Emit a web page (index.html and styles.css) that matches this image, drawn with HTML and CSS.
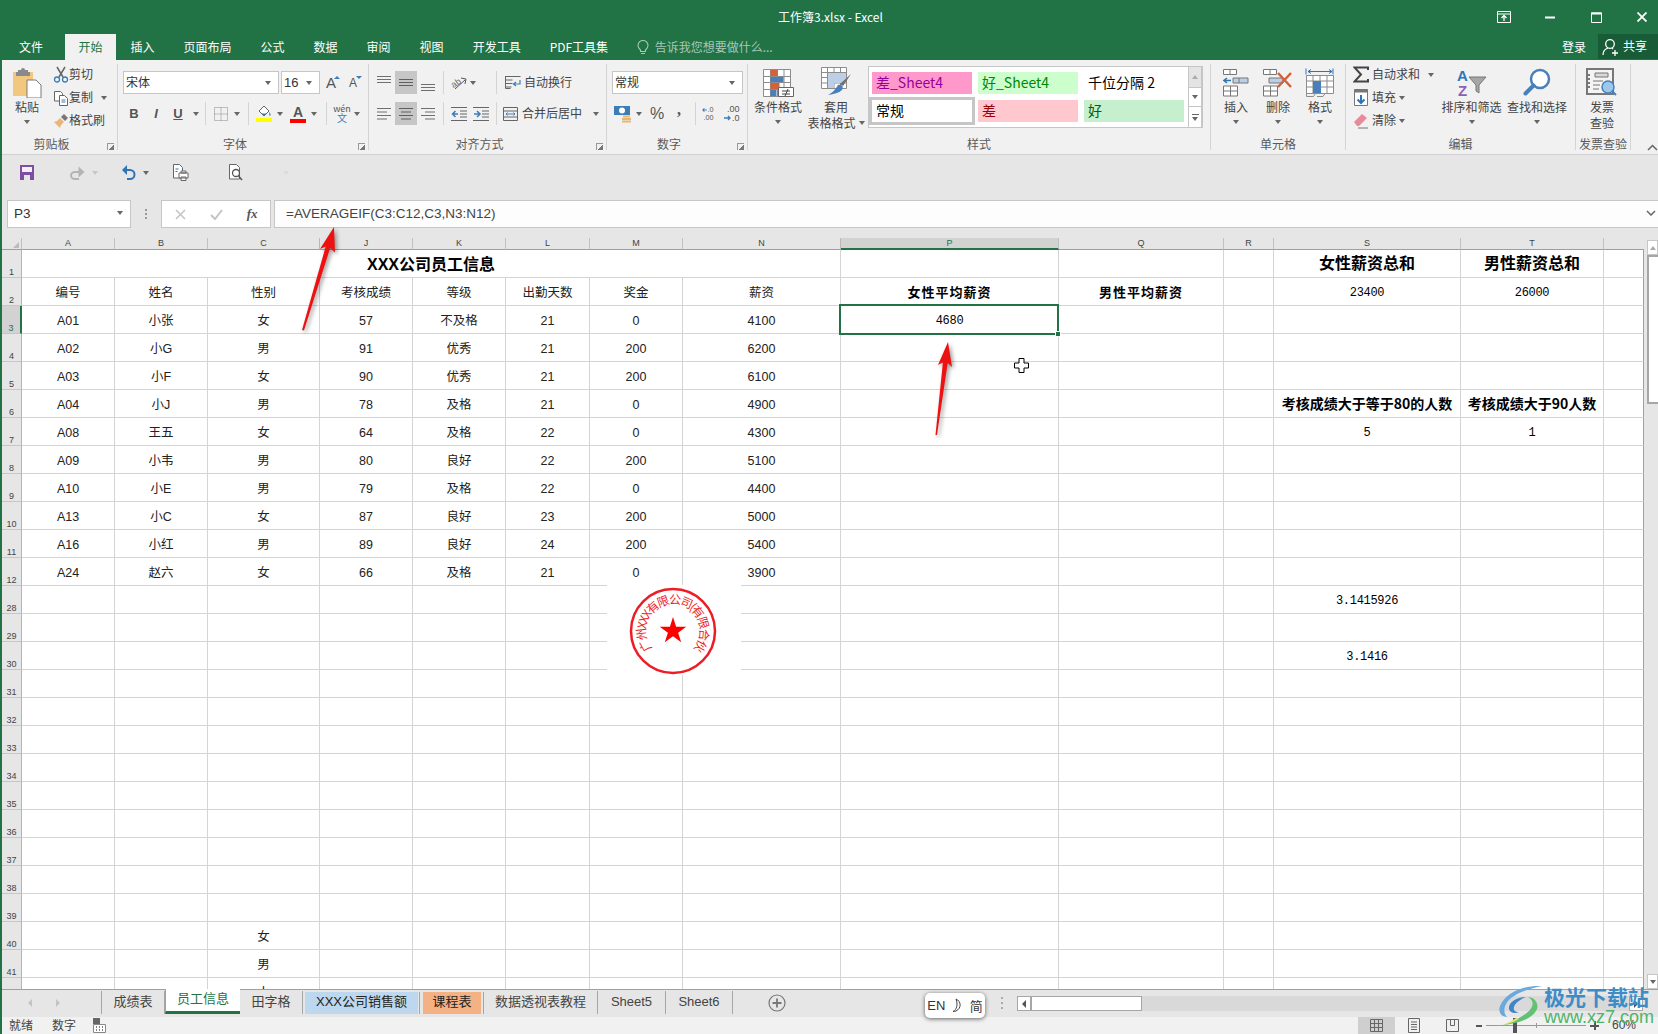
FILE: index.html
```html
<!DOCTYPE html>
<html lang="zh-CN">
<head>
<meta charset="utf-8">
<title>工作簿3.xlsx - Excel</title>
<link rel="stylesheet" href="styles.css">
</head>
<body>
<div class="app">
  <header class="titlebar">
    <span class="doc">工作簿3.xlsx - Excel</span>
    <div class="winbtns">
      <span class="wb"><svg width="14" height="12" viewBox="0 0 14 12"><path d="M.5 .5h13v11H.5zM.5 3h13" fill="none" stroke="#fff"/><path d="M7 10V5M4.500 7 7 4.500 9.500 7" fill="none" stroke="#fff" stroke-width="1.300"/></svg></span>
      <span class="wb"><svg width="10" height="10" viewBox="0 0 10 10"><path d="M0 5.500h10" stroke="#fff" stroke-width="2"/></svg></span>
      <span class="wb"><svg width="11" height="11" viewBox="0 0 11 11"><path d="M.5 1h10v9.500h-10z" fill="none" stroke="#fff"/><path d="M0 1.500h11" stroke="#fff" stroke-width="2"/></svg></span>
      <span class="wb wb-x"><svg width="10" height="10" viewBox="0 0 10 10"><path d="M.5 .5l9 9M9.500 .5l-9 9" stroke="#fff" stroke-width="1.800"/></svg></span>
    </div>
  </header>

  <nav class="tabs">
    <span class="tab tab-file">文件</span>
    <span class="tab tab-on">开始</span>
    <span class="tab">插入</span>
    <span class="tab">页面布局</span>
    <span class="tab">公式</span>
    <span class="tab">数据</span>
    <span class="tab">审阅</span>
    <span class="tab">视图</span>
    <span class="tab">开发工具</span>
    <span class="tab">PDF工具集</span>
    <span class="tell"><svg width="12" height="15" viewBox="0 0 12 15"><path d="M3.500 10C2 8.500 1 7.500 1 5.500a5 5 0 0 1 10 0c0 2-1 3-2.500 4.500v1.500h-5zM4 13.500h4" fill="none" stroke="#a9c7b6" stroke-width="1.100"/></svg>告诉我您想要做什么...</span>
    <span class="login">登录</span>
    <span class="share"><svg width="18" height="18" viewBox="0 0 18 18"><circle cx="8" cy="6" r="4.300" fill="none" stroke="#fff" stroke-width="1.300"/><path d="M1 17c0-4 2-6 5-7M10 10l1 1M13 12v6M10 15h6" fill="none" stroke="#fff" stroke-width="1.300"/></svg>共享</span>
  </nav>

  <section class="ribbon">
    <div class="grp g-clip">
      <div class="body">
        <div class="lg w50">
          <span class="ic"><svg width="30" height="31" viewBox="0 0 30 31"><path d="M1 5h20v24H1z" fill="#f2c77f"/><path d="M6 5V3h3a2 2 0 0 1 4 0h3v2h2v4H4V5z" fill="#8a8a8a"/><path d="M15 13h9l5 5v13H15z" fill="#fff" stroke="#7a7a7a"/></svg></span>
          <span class="tx">粘贴</span>
          <span class="car mt5"></span>
        </div>
        <div class="col">
          <div class="sm"><span class="si"><svg width="16" height="17" viewBox="0 0 16 17"><path d="M4 1l6 10M12 1L6 11" stroke="#666" stroke-width="1.500" fill="none"/><circle cx="4" cy="13.500" r="2.500" fill="none" stroke="#3e7cb8" stroke-width="1.300"/><circle cx="12" cy="13.500" r="2.500" fill="none" stroke="#3e7cb8" stroke-width="1.300"/></svg></span>剪切</div>
          <div class="sm"><span class="si"><svg width="16" height="16" viewBox="0 0 16 16"><path d="M1.500 1.500h6l2 2V11h-8z" fill="#fff" stroke="#666"/><path d="M6.500 5.500h5l3 3v7h-8z" fill="#fff" stroke="#666"/><path d="M8.500 10h4M8.500 12h4" stroke="#3e7cb8"/></svg></span>复制<span class="car ml8"></span></div>
          <div class="sm"><span class="si"><svg width="16" height="16" viewBox="0 0 16 16"><path d="M8 4l4 4 3-3-4-4z" fill="#777"/><path d="M7 5l4 4-3 3-1 3-6-6 3-1z" fill="#eab676"/></svg></span>格式刷</div>
        </div>
      </div>
      <div class="lbl lp">剪贴板</div>
      <span class="launch"></span>
    </div>

    <div class="grp g-font">
      <div class="rows pl5">
        <div class="r">
          <span class="box w156">宋体<span class="car push"></span></span>
          <span class="box w39 ml2 num">16<span class="car push"></span></span>
          <span class="bi w22 letter">A<i class="tri up"></i></span>
          <span class="bi w22 letter small">A<i class="tri down"></i></span>
        </div>
        <div class="r">
          <span class="bi w22 fmt">B</span>
          <span class="bi w22 fmt it">I</span>
          <span class="bi w22 fmt un">U</span>
          <span class="bi w13"><span class="car"></span></span>
          <span class="sep w7"></span>
          <span class="bi w24"><svg width="14" height="14" viewBox="0 0 14 14"><path d="M.5 .5h13v13H.5z" fill="none" stroke="#888" stroke-dasharray="1 1"/><path d="M7 .5v13M.5 7h13" stroke="#888" stroke-dasharray="1 1"/></svg></span>
          <span class="bi w8"><span class="car"></span></span>
          <span class="sep w14"></span>
          <span class="bi w18"><svg width="16" height="18" viewBox="0 0 16 18"><path d="M3 6l5-5 5 5-5 5z" fill="#fff" stroke="#666"/><path d="M5 8.500h6L8 11z" fill="#3e7cb8"/><path d="M13.500 7c1 2 1.500 3 .5 4-1-1-1-2-.5-4z" fill="#3e7cb8"/><path d="M0 13h16v4H0z" fill="#ffff00"/></svg></span>
          <span class="bi w14"><span class="car"></span></span>
          <span class="bi w22 color-a">A<i class="under"></i></span>
          <span class="bi w10"><span class="car"></span></span>
          <span class="sep w14"></span>
          <span class="bi w18 wen"><i>wén</i><b>文</b></span>
          <span class="bi w12"><span class="car"></span></span>
        </div>
      </div>
      <div class="lbl lp">字体</div>
      <span class="launch"></span>
    </div>

    <div class="grp g-align">
      <div class="rows pl4">
        <div class="r">
          <span class="bi w22"><svg width="14" height="16" viewBox="0 0 14 16"><path d="M0 1.500h14M0 4.500h14M0 7.500h14" stroke="#6f6f6f"/></svg></span>
          <span class="bi w22 on"><svg width="14" height="16" viewBox="0 0 14 16"><path d="M0 4.500h14M0 7.500h14M0 10.500h14" stroke="#5f5f5f"/></svg></span>
          <span class="bi w22"><svg width="14" height="16" viewBox="0 0 14 16"><path d="M0 9.500h14M0 12.500h14M0 15.500h14" stroke="#6f6f6f"/></svg></span>
          <span class="sep w9"></span>
          <span class="bi w21"><svg width="17" height="15" viewBox="0 0 17 15"><text x="1" y="11" font-size="9" fill="#666" transform="rotate(-35 6 8)" font-family="Liberation Sans">ab</text><path d="M5 14L15 5M11 3l5 1-1 5" fill="none" stroke="#555"/></svg></span>
          <span class="bi w8"><span class="car"></span></span>
          <span class="w15"></span>
          <span class="sep w8"></span>
          <span class="wtxt ml4"><svg width="17" height="16" viewBox="0 0 17 16"><path d="M1.500 1.500h15M1.500 5h7M1.500 8.500h7M1.500 12h6M1.500 1v12.500h5" fill="none" stroke="#666"/><path d="M16 5v4h-6M12 7l-2.500 2 2.500 2" fill="none" stroke="#3e7cb8" stroke-width="1.200"/></svg>自动换行</span>
        </div>
        <div class="r">
          <span class="bi w22"><svg width="14" height="14" viewBox="0 0 14 14"><path d="M0 1.500h14M0 5h10M0 8.500h14M0 12h10" stroke="#6f6f6f"/></svg></span>
          <span class="bi w22 on"><svg width="14" height="14" viewBox="0 0 14 14"><path d="M0 1.500h14M2 5h10M0 8.500h14M2 12h10" stroke="#5f5f5f"/></svg></span>
          <span class="bi w22"><svg width="14" height="14" viewBox="0 0 14 14"><path d="M0 1.500h14M4 5h10M0 8.500h14M4 12h10" stroke="#6f6f6f"/></svg></span>
          <span class="sep w9"></span>
          <span class="bi w22"><svg width="16" height="14" viewBox="0 0 16 14"><path d="M0 .5h16M9 4h7M9 7h7M9 10h7M0 13.500h16" stroke="#666"/><path d="M7 7H2M4.500 4 1.500 7l3 3" fill="none" stroke="#3e7cb8" stroke-width="1.500"/></svg></span>
          <span class="bi w22"><svg width="16" height="14" viewBox="0 0 16 14"><path d="M0 .5h16M9 4h7M9 7h7M9 10h7M0 13.500h16" stroke="#666"/><path d="M1 7h5M4 4l3 3-3 3" fill="none" stroke="#3e7cb8" stroke-width="1.500"/></svg></span>
          <span class="sep w8"></span>
          <span class="wtxt ml2"><svg width="17" height="16" viewBox="0 0 17 16"><path d="M1.500 1.500h14v13h-14zM1.500 5h14M1.500 11h14" fill="none" stroke="#666"/><path d="M4 8h9M5.500 6.500 4 8l1.500 1.500M11.500 6.500 13 8l-1.500 1.500" fill="none" stroke="#3e7cb8"/></svg>合并后居中<span class="car ml8"></span></span>
        </div>
      </div>
      <div class="lbl lp">对齐方式</div>
      <span class="launch"></span>
    </div>

    <div class="grp g-num">
      <div class="rows pl5">
        <div class="r"><span class="box w131">常规<span class="car push"></span></span></div>
        <div class="r">
          <span class="bi w22"><svg width="18" height="18" viewBox="0 0 18 18"><path d="M0 1h16v9H0z" fill="#3e7cb8"/><circle cx="8" cy="5.500" r="3" fill="#fff"/><path d="M8 14h9M8 16.500h9" stroke="#e9b66f" stroke-width="2"/><path d="M9 11.500h7" stroke="#e9b66f" stroke-width="2"/></svg></span>
          <span class="bi w10"><span class="car"></span></span>
          <span class="bi w26 pct">%</span>
          <span class="bi w18 cma">,</span>
          <span class="sep w14"></span>
          <span class="bi w16"><svg width="20" height="18" viewBox="0 0 20 18"><text x="7" y="7" font-size="9" fill="#555" font-family="Liberation Sans">.0</text><text x="2" y="16" font-size="9" fill="#555" font-family="Liberation Sans">.00</text><path d="M6 4H1M3 2 1 4l2 2" fill="none" stroke="#3e7cb8" stroke-width="1.300"/></svg></span>
          <span class="bi w26"><svg width="20" height="18" viewBox="0 0 20 18"><text x="6" y="7" font-size="9" fill="#555" font-family="Liberation Sans">.00</text><text x="11" y="16" font-size="9" fill="#555" font-family="Liberation Sans">.0</text><path d="M3 13h6M7 11l2 2-2 2" fill="none" stroke="#3e7cb8" stroke-width="1.300"/></svg></span>
        </div>
      </div>
      <div class="lbl lp">数字</div>
      <span class="launch"></span>
    </div>

    <div class="grp g-style">
      <div class="body">
        <div class="lg w60">
          <span class="ic"><svg width="31" height="28" viewBox="0 0 31 28"><path d="M.5 .5h27v27H.5zM.5 7.500h27M.5 13.500h27M.5 20.500h27M7.500 .5v27M14.500 .5v27M21 .5v27" fill="#fff" stroke="#8c8c8c"/><path d="M7.500 1h7v6h-7zM7.500 14h9v6h-9z" fill="#d5613a"/><path d="M7.500 8h13v5h-13zM7.500 21h6v6h-6z" fill="#4a80ba"/><path d="M15.500 18.500h15v9h-15z" fill="#fff" stroke="#666"/><path d="M19 22h8M19 25h8M25 20l-3 7" stroke="#444" fill="none"/></svg></span>
          <span class="tx">条件格式</span>
          <span class="car mt5"></span>
        </div>
        <div class="lg w56">
          <span class="ic"><svg width="31" height="31" viewBox="0 0 31 31"><path d="M.5 .5h25v21H.5zM.5 5.500h25M.5 10.500h25M.5 16h25M6.500 .5v21M13 .5v21M19.500 .5v21" fill="#fff" stroke="#8c8c8c"/><path d="M7 6h18v10H13v5H7z" fill="#bccfe6"/><path d="M30 7l-8 12-3-2z" fill="#6f6f6f"/><path d="M17 18c4-1 6 2 4 5-3 3-8 4-14 5 4-2 7-5 10-10z" fill="#4a80ba"/></svg></span>
          <span class="tx">套用</span>
          <span class="tx tx2">表格格式<span class="car ml3"></span></span>
        </div>
        <div class="gallery">
          <div class="gcells">
            <span class="gc g-bad4">差_Sheet4</span>
            <span class="gc g-good4">好_Sheet4</span>
            <span class="gc g-sep">千位分隔 2</span>
            <span class="gc g-norm">常规</span>
            <span class="gc g-bad">差</span>
            <span class="gc g-good">好</span>
          </div>
          <div class="gscroll">
            <span class="gs gs1"><i class="tri-up"></i></span>
            <span class="gs gs2"><span class="car"></span></span>
            <span class="gs gs3"><i class="more"></i><span class="car"></span></span>
          </div>
        </div>
      </div>
      <div class="lbl">样式</div>
    </div>

    <div class="grp g-cell">
      <div class="body pl4">
        <div class="lg w42">
          <span class="ic"><svg width="26" height="28" viewBox="0 0 26 28"><path d="M.5 .5h13v5H.5zM7 .5v5M.5 17h14v10H.5zM.5 22h14M7.500 17v10" fill="#fff" stroke="#777"/><path d="M10 9h15v5H10zM16 9v5" fill="#bccfe6" stroke="#777"/><path d="M8 11.500H1M4 9l-3 2.500L4 14" fill="none" stroke="#2e75b6" stroke-width="1.500"/></svg></span>
          <span class="tx">插入</span><span class="car mt5"></span>
        </div>
        <div class="lg w42">
          <span class="ic"><svg width="30" height="28" viewBox="0 0 30 28"><path d="M.5 .5h13v5H.5zM7 .5v5M.5 17h14v10H.5zM.5 22h14M7.500 17v10" fill="#fff" stroke="#777"/><path d="M6 9h14v5H6z" fill="#bccfe6" stroke="#777"/><path d="M15 4l13 14M28 4 15 18" stroke="#d5613a" stroke-width="2.500"/></svg></span>
          <span class="tx">删除</span><span class="car mt5"></span>
        </div>
        <div class="lg w42">
          <span class="ic"><svg width="30" height="30" viewBox="0 0 30 30"><path d="M1 .5v6M28 .5v6M3 3.500h24M6 1.500l-3 2 3 2M24 1.500l3 2-3 2" fill="none" stroke="#2e75b6"/><path d="M1.500 7.500h27v18H1.500zM1.500 13h27M1.500 19h27M8 7.500v18M15 7.500v18M22 7.500v18" fill="#fff" stroke="#8c8c8c"/><path d="M8 13h8v12H8z" fill="#4a80ba"/><path d="M1.500 25.500v3h7l2-3M12 28.500h6l2-3" fill="none" stroke="#8c8c8c"/></svg></span>
          <span class="tx">格式</span><span class="car mt5"></span>
        </div>
      </div>
      <div class="lbl">单元格</div>
    </div>

    <div class="grp g-edit">
      <div class="body">
        <div class="col w93 pl6">
          <div class="sm sm2"><span class="si"><svg width="16" height="17" viewBox="0 0 16 17"><path d="M15 4V1.500H1.500L8 8.500 1.500 15.500H15V13" fill="none" stroke="#444" stroke-width="2"/></svg></span>自动求和<span class="car ml8"></span></div>
          <div class="sm sm2"><span class="si"><svg width="14" height="17" viewBox="0 0 14 17"><path d="M.5 .5h13v16H.5z" fill="#fff" stroke="#777"/><path d="M.5 .5h13v3H.5z" fill="#777"/><path d="M7 6v8M3.500 10.500 7 14l3.500-3.500" fill="none" stroke="#2e75b6" stroke-width="2"/></svg></span>填充<span class="car ml3"></span></div>
          <div class="sm sm2"><span class="si"><svg width="16" height="16" viewBox="0 0 16 16"><path d="M1 9l8-8 5 4-8 8H4z" fill="#e98a9b"/><path d="M5 15h10" stroke="#777"/></svg></span>清除<span class="car ml3"></span></div>
        </div>
        <div class="lg w65">
          <span class="ic"><svg width="30" height="29" viewBox="0 0 30 29"><text x="0" y="13" font-size="15" font-weight="700" fill="#2e75b6" font-family="Liberation Sans">A</text><text x="1" y="28" font-size="15" font-weight="700" fill="#8e5fb5" font-family="Liberation Sans">Z</text><path d="M12 9h17l-7 8v8l-3-2v-6z" fill="#a6a6a6" stroke="#777"/></svg></span>
          <span class="tx">排序和筛选</span><span class="car mt5"></span>
        </div>
        <div class="lg w66">
          <span class="ic"><svg width="28" height="29" viewBox="0 0 28 29"><circle cx="17" cy="11" r="9" fill="#fff" stroke="#4a80ba" stroke-width="2.500"/><path d="M10.500 17.500l-8 8" stroke="#4a80ba" stroke-width="4" stroke-linecap="round"/></svg></span>
          <span class="tx">查找和选择</span><span class="car mt5"></span>
        </div>
      </div>
      <div class="lbl">编辑</div>
    </div>

    <div class="grp g-inv">
      <div class="body">
        <div class="lg w52">
          <span class="ic"><svg width="32" height="29" viewBox="0 0 32 29"><path d="M1 1h26v25H1z" fill="#f4f4f4" stroke="#777" stroke-width="2"/><path d="M3 6v16" stroke="#777" stroke-dasharray="2 2" stroke-width="2"/><path d="M9 5h13v4H9z" fill="#d9d9d9" stroke="#777"/><path d="M7 13h10M7 17h7M7 21h6" stroke="#777"/><circle cx="22" cy="19" r="6" fill="#9cc8ee" stroke="#4a80ba" stroke-width="1.500"/><path d="M26 23l4 4" stroke="#4a80ba" stroke-width="2"/></svg></span>
          <span class="tx">发票</span>
          <span class="tx tx2">查验</span>
        </div>
      </div>
      <div class="lbl">发票查验</div>
    </div>
    <span class="collapse"><svg width="11" height="7" viewBox="0 0 11 7"><path d="M1 6l4.500-4.500L10 6" fill="none" stroke="#666" stroke-width="1.500"/></svg></span>
  </section>

  <div class="qat">
    <span class="bi w50"><svg width="14" height="15" viewBox="0 0 14 15"><path d="M0 0h14v15H0z" fill="#7e4fa0"/><path d="M2 2h10v5H2z" fill="#f3eef7"/><path d="M4 10h6v5H4z" fill="#e6e6e6"/></svg></span>
    <span class="bi w18 ml16"><svg width="16" height="14" viewBox="0 0 16 14"><path d="M13 6H6a4 3.500 0 0 0 0 7h4" fill="none" stroke="#b4b4b4" stroke-width="2"/><path d="M9.500 0.500l6 5.500-6 5.500z" fill="#b4b4b4"/></svg></span>
    <span class="bi w18"><span class="car faint"></span></span>
    <span class="bi w18 ml15"><svg width="15" height="15" viewBox="0 0 15 15"><path d="M2 5h7a4.500 4.500 0 0 1 0 9H6" fill="none" stroke="#2e75b6" stroke-width="2"/><path d="M6 0 1 5l5 5z" fill="#2e75b6"/></svg></span>
    <span class="bi w18"><span class="car"></span></span>
    <span class="bi w18 ml17"><svg width="16" height="17" viewBox="0 0 16 17"><path d="M.5 .5h6l3 3V14H.5z" fill="#fff" stroke="#666"/><path d="M6 9h9v5H6zM8 7h5v2H8zM8 13h5v3.500H8z" fill="#fff" stroke="#666"/><path d="M2.500 5h3M2.500 7.500h2" stroke="#2e75b6"/></svg></span>
    <span class="bi w18 ml37"><svg width="14" height="17" viewBox="0 0 14 17"><path d="M.5 .5h7l3 3V15H.5z" fill="#fff" stroke="#666"/><circle cx="7" cy="9" r="3.500" fill="#fff" stroke="#555" stroke-width="1.300"/><path d="M9.500 12l3.500 4" stroke="#555" stroke-width="1.500"/></svg></span>
    <span class="bi w16 ml33 custom"><span class="car faint"></span></span>
  </div>

  <div class="fbar">
    <div class="namebox">P3<span class="car push"></span></div>
    <div class="fdots"></div>
    <div class="fxbox">
      <span><svg width="11" height="11" viewBox="0 0 11 11"><path d="M1 1l9 9M10 1l-9 9" stroke="#c4c4c4" stroke-width="1.500"/></svg></span>
      <span><svg width="13" height="11" viewBox="0 0 13 11"><path d="M1 6l4 4 7-9" fill="none" stroke="#c4c4c4" stroke-width="2"/></svg></span>
      <span class="fx">fx</span>
    </div>
    <div class="finput">=AVERAGEIF(C3:C12,C3,N3:N12)<span class="fchev"><svg width="10" height="6" viewBox="0 0 10 6"><path d="M1 1l4 4 4-4" fill="none" stroke="#666" stroke-width="1.500"/></svg></span></div>
  </div>

  <div class="main">
    <div class="sheet">
      <table class="grid">
        <colgroup><col class="c0"><col class="ca"><col class="ca"><col class="cc"><col class="ca"><col class="ca"><col class="cl"><col class="ca"><col class="cn"><col class="cp"><col class="cq"><col class="cr"><col class="cs"><col class="ct"><col class="cu"></colgroup>
        <thead><tr><th class="corner"><i></i></th><th>A</th><th>B</th><th>C</th><th class="hid">J</th><th>K</th><th>L</th><th>M</th><th>N</th><th class="hid cur">P</th><th>Q</th><th>R</th><th>S</th><th>T</th><th></th></tr></thead>
        <tbody>
          <tr><th>1</th><td colspan="8" class="ttl">XXX公司员工信息</td><td></td><td></td><td></td><td class="big">女性薪资总和</td><td class="big">男性薪资总和</td><td></td></tr>
          <tr><th>2</th><td>编号</td><td>姓名</td><td>性别</td><td>考核成绩</td><td>等级</td><td>出勤天数</td><td>奖金</td><td>薪资</td><td class="bd">女性平均薪资</td><td class="bd">男性平均薪资</td><td></td><td class="mono">23400</td><td class="mono">26000</td><td></td></tr>
          <tr><th class="cur">3</th><td>A01</td><td>小张</td><td>女</td><td>57</td><td>不及格</td><td>21</td><td>0</td><td>4100</td><td class="mono">4680</td><td></td><td></td><td></td><td></td><td></td></tr>
          <tr><th>4</th><td>A02</td><td>小G</td><td>男</td><td>91</td><td>优秀</td><td>21</td><td>200</td><td>6200</td><td></td><td></td><td></td><td></td><td></td><td></td></tr>
          <tr><th>5</th><td>A03</td><td>小F</td><td>女</td><td>90</td><td>优秀</td><td>21</td><td>200</td><td>6100</td><td></td><td></td><td></td><td></td><td></td><td></td></tr>
          <tr><th>6</th><td>A04</td><td>小J</td><td>男</td><td>78</td><td>及格</td><td>21</td><td>0</td><td>4900</td><td></td><td></td><td></td><td class="bd2">考核成绩大于等于80的人数</td><td class="bd2">考核成绩大于90人数</td><td></td></tr>
          <tr><th>7</th><td>A08</td><td>王五</td><td>女</td><td>64</td><td>及格</td><td>22</td><td>0</td><td>4300</td><td></td><td></td><td></td><td class="mono">5</td><td class="mono">1</td><td></td></tr>
          <tr><th>8</th><td>A09</td><td>小韦</td><td>男</td><td>80</td><td>良好</td><td>22</td><td>200</td><td>5100</td><td></td><td></td><td></td><td></td><td></td><td></td></tr>
          <tr><th>9</th><td>A10</td><td>小E</td><td>男</td><td>79</td><td>及格</td><td>22</td><td>0</td><td>4400</td><td></td><td></td><td></td><td></td><td></td><td></td></tr>
          <tr><th>10</th><td>A13</td><td>小C</td><td>女</td><td>87</td><td>良好</td><td>23</td><td>200</td><td>5000</td><td></td><td></td><td></td><td></td><td></td><td></td></tr>
          <tr><th>11</th><td>A16</td><td>小红</td><td>男</td><td>89</td><td>良好</td><td>24</td><td>200</td><td>5400</td><td></td><td></td><td></td><td></td><td></td><td></td></tr>
          <tr><th>12</th><td>A24</td><td>赵六</td><td>女</td><td>66</td><td>及格</td><td>21</td><td>0</td><td>3900</td><td></td><td></td><td></td><td></td><td></td><td></td></tr>
          <tr><th>28</th><td></td><td></td><td></td><td></td><td></td><td></td><td></td><td></td><td></td><td></td><td></td><td class="mono">3.1415926</td><td></td><td></td></tr>
          <tr><th>29</th><td></td><td></td><td></td><td></td><td></td><td></td><td></td><td></td><td></td><td></td><td></td><td></td><td></td><td></td></tr>
          <tr><th>30</th><td></td><td></td><td></td><td></td><td></td><td></td><td></td><td></td><td></td><td></td><td></td><td class="mono">3.1416</td><td></td><td></td></tr>
          <tr><th>31</th><td></td><td></td><td></td><td></td><td></td><td></td><td></td><td></td><td></td><td></td><td></td><td></td><td></td><td></td></tr>
          <tr><th>32</th><td></td><td></td><td></td><td></td><td></td><td></td><td></td><td></td><td></td><td></td><td></td><td></td><td></td><td></td></tr>
          <tr><th>33</th><td></td><td></td><td></td><td></td><td></td><td></td><td></td><td></td><td></td><td></td><td></td><td></td><td></td><td></td></tr>
          <tr><th>34</th><td></td><td></td><td></td><td></td><td></td><td></td><td></td><td></td><td></td><td></td><td></td><td></td><td></td><td></td></tr>
          <tr><th>35</th><td></td><td></td><td></td><td></td><td></td><td></td><td></td><td></td><td></td><td></td><td></td><td></td><td></td><td></td></tr>
          <tr><th>36</th><td></td><td></td><td></td><td></td><td></td><td></td><td></td><td></td><td></td><td></td><td></td><td></td><td></td><td></td></tr>
          <tr><th>37</th><td></td><td></td><td></td><td></td><td></td><td></td><td></td><td></td><td></td><td></td><td></td><td></td><td></td><td></td></tr>
          <tr><th>38</th><td></td><td></td><td></td><td></td><td></td><td></td><td></td><td></td><td></td><td></td><td></td><td></td><td></td><td></td></tr>
          <tr><th>39</th><td></td><td></td><td></td><td></td><td></td><td></td><td></td><td></td><td></td><td></td><td></td><td></td><td></td><td></td></tr>
          <tr><th>40</th><td></td><td></td><td>女</td><td></td><td></td><td></td><td></td><td></td><td></td><td></td><td></td><td></td><td></td><td></td></tr>
          <tr><th>41</th><td></td><td></td><td>男</td><td></td><td></td><td></td><td></td><td></td><td></td><td></td><td></td><td></td><td></td><td></td></tr>
          <tr><th>42</th><td></td><td></td><td>人</td><td></td><td></td><td></td><td></td><td></td><td></td><td></td><td></td><td></td><td></td><td></td></tr>
        </tbody>
      </table>
    </div>
    <div class="vscroll">
      <span class="vs-btn"><i class="tri-up"></i></span>
      <span class="vs-thumb"></span>
      <span class="vs-btn vs-down"><span class="car"></span></span>
    </div>
  </div>

  <div class="sheetbar">
    <div class="nav"><i class="nl"></i><i class="nr"></i></div>
    <span class="st w63">成绩表</span>
    <span class="st st-on">员工信息</span>
    <span class="st w63">田字格</span>
    <span class="st st-blue">XXX公司销售额</span>
    <span class="st st-org">课程表</span>
    <span class="st w114">数据透视表教程</span>
    <span class="st w68">Sheet5</span>
    <span class="st w67">Sheet6</span>
    <span class="add"><svg width="18" height="18" viewBox="0 0 18 18"><circle cx="9" cy="9" r="8" fill="none" stroke="#777" stroke-width="1.200"/><path d="M9 4.500v9M4.500 9h9" stroke="#777" stroke-width="1.800"/></svg></span>
    <div class="hs">
      <span class="hs-dots"></span>
      <span class="hs-btn"><i class="nl dark"></i></span>
      <span class="hs-thumb"></span>
      <span class="hs-track"></span>
      <span class="hs-btn hs-r"><i class="nr dark"></i></span>
    </div>
  </div>

  <footer class="status">
    <span class="s1">就绪</span>
    <span class="s2">数字</span>
    <span class="s3"><svg width="13" height="15" viewBox="0 0 13 15"><path d="M0 0h7v6H0z" fill="#666"/><path d="M.5 6.500h12v8H.5z" fill="#fff" stroke="#888"/><path d="M3 9h1M6 9h1M9 9h1M3 12h1M6 12h1M9 12h1" stroke="#555" stroke-width="1.500"/></svg></span>
    <div class="views">
      <span class="v v-on"><svg width="13" height="13" viewBox="0 0 13 13"><path d="M.5 .5h12v12H.5zM4.500 .5v12M8.500 .5v12M.5 4.500h12M.5 8.500h12" fill="none" stroke="#666"/></svg></span>
      <span class="v"><svg width="12" height="15" viewBox="0 0 12 15"><path d="M.5 .5h11v14H.5zM3 4h6M3 6.500h6M3 9h6M3 11.500h6" fill="none" stroke="#666"/></svg></span>
      <span class="v"><svg width="13" height="13" viewBox="0 0 13 13"><path d="M.5 .5h12v12H.5zM4.500 .5v6h4v-6" fill="none" stroke="#666"/></svg></span>
    </div>
    <span class="zoom-minus"></span>
    <span class="slider"><i class="tick"></i><i class="thumb"></i></span>
    <span class="zoom-plus"></span>
    <span class="pct-t">60%</span>
  </footer>

  <div class="stamp">
    <svg width="134" height="90" viewBox="0 0 134 90">
      <defs><path id="ring" d="M45.300 63.400A27 27 0 1 1 86.700 63.400"/></defs>
      <circle cx="66" cy="46" r="42" fill="none" stroke="#ee1c25" stroke-width="2.500"/>
      <text class="stamp-t"><textPath href="#ring">广州XXX有限公司(有限合伙)</textPath></text>
      <path d="M66 32l3.100 9.700h10.200l-8.200 6 3.100 9.600L66 51.350l-8.200 5.950 3.100-9.650-8.200-5.950h10.200z" fill="#f00"/>
    </svg>
  </div>
  <div class="sel"><i></i></div>
  <svg class="arrows" width="1658" height="1034" viewBox="0 0 1658 1034">
    <path d="M334 227 335 252.500 330.200 248 304 330.500 302 330 325.700 246.500 320 249z" fill="#ee1111"/>
    <path d="M948 342 952 367 947.700 363.100 937 435 935.500 435 942.900 362.500 938 365z" fill="#ee1111"/>
  </svg>
  <svg class="cursor" width="15" height="15" viewBox="0 0 15 15"><path d="M5 .5h5v4.500h4.500v5H10v4.500H5V10H.5V5H5z" fill="#fff" stroke="#000"/></svg>
  <div class="ime">EN <svg width="11" height="15" viewBox="0 0 11 15"><path d="M4 1c5 2 6 9 0 12-1 .5-2 .5-3 .5 4-2 5-7 3-12.500z" fill="none" stroke="#444"/></svg> 简</div>
  <div class="mark">
    <svg width="46" height="42" viewBox="0 0 46 42">
      <path d="M44 2C26 1 8 8 2 22c-2 6 1 11 7 11C4 28 6 18 16 12 24 7 34 4 44 2z" fill="#6aa9dd"/>
      <path d="M28 13C18 13 10 19 11 25c1 4 6 5 10 3-4 0-6-2-5-5 1-4 7-8 12-10z" fill="#3f86c8"/>
      <path d="M30 13c6 3 6 9 1 14-6 6-16 10-26 14 14-1 30-6 34-16 2-6-3-12-9-12z" fill="#62c172"/>
      <path d="M5 41c6-1 11-3 16-6l-3-1c-4 3-9 5-13 7z" fill="#e8e26a"/>
    </svg>
    <div class="mark-t"><b>极光下载站</b><span>www.xz7.com</span></div>
  </div>
</div>
</body>
</html>
```
FILE: styles.css
```css
*{box-sizing:border-box}
html,body{margin:0;padding:0;overflow:hidden}
body{font:12px/1.2 "Noto Sans CJK SC","Liberation Sans",sans-serif;color:#444}
i{font-style:normal}
.app{position:relative;width:1658px;height:1034px;padding-left:2px;background:#217346;display:flex;flex-direction:column;overflow:hidden}

/* title + tabs */
.titlebar{height:34px;background:#217346;color:#fff;display:flex;align-items:center;flex:none}
.doc{margin-left:776px;white-space:nowrap}
.winbtns{margin-left:auto;display:flex;height:34px}
.wb{width:46px;display:flex;align-items:center;justify-content:center}
.wb-x{width:32px;margin-left:7px}
.tabs{height:26px;flex:none;background:#217346;display:flex;color:#fff;align-items:stretch}
.tab{padding:0 14.5px;display:flex;align-items:center;white-space:nowrap}
.tab-file{padding:0 17px;margin-right:5px}
.tab-on{background:#f1f1f1;color:#217346;padding:0 13.5px}
.tell{margin-left:14px;display:flex;align-items:center;gap:6px;color:#a9c7b6;white-space:nowrap}
.login{margin-left:auto;margin-right:12px;align-self:center}
.share{width:60px;height:25px;background:#185c37;display:flex;align-items:center;gap:3px;padding-left:4px}

/* ribbon */
.ribbon{position:relative;height:95px;flex:none;background:#f1f1f1;border-bottom:1px solid #d2d2d2;display:flex}
.grp{position:relative;height:86px;margin:4px 0;border-right:1px solid #d4d4d4;display:flex;flex-direction:column;flex:none}
.g-clip{width:116px}.g-font{width:251px}.g-align{width:238px}.g-num{width:141px}.g-style{width:463px}.g-cell{width:135px}.g-edit{width:230px}.g-inv{width:55px}
.body{display:flex;height:72px}
.rows{padding-top:7px}
.pl4{padding-left:4px}.pl5{padding-left:5px}.pl6{padding-left:6px}
.r{display:flex;height:23px;align-items:center}
.r+.r{margin-top:8px}
.lbl{margin-top:auto;margin-bottom:-1px;height:14px;line-height:14px;text-align:center;color:#5a5a5a;white-space:nowrap}
.lp{padding-right:16px}
.launch{position:absolute;right:3px;bottom:0;width:7px;height:7px;border:1px solid #999;border-width:1px 0 0 1px;background:linear-gradient(135deg,transparent 55%,#777 56%)}
.lg{display:flex;flex-direction:column;align-items:center;padding-top:3px;flex:none}
.ic{height:31px;display:flex;align-items:center;justify-content:center}
.tx{margin-top:1px;line-height:16px;white-space:nowrap;display:flex;align-items:center}
.tx2{margin-top:0}
.col{display:flex;flex-direction:column;flex:none;margin-top:-1px}
.sm{height:23px;display:flex;align-items:center;white-space:nowrap}
.si{width:17px;display:flex;justify-content:center;margin-right:0}
.sm2 .si{margin-right:3px}
.car{display:inline-block;width:0;height:0;border-style:solid;border-width:4px 3.5px 0;border-color:#666 transparent transparent;flex:none}
.car.faint{border-top-color:#c6c6c6}
.push{margin-left:auto}
.mt5{margin-top:5px}.ml2{margin-left:2px}.ml3{margin-left:3px}.ml4{margin-left:4px}.ml8{margin-left:8px}.ml15{margin-left:15px}.ml16{margin-left:16px}.ml17{margin-left:17px}.ml33{margin-left:33px}.ml37{margin-left:37px}
.w7{width:7px}.w8{width:8px}.w9{width:9px}.w10{width:10px}.w12{width:12px}.w13{width:13px}.w14{width:14px}.w15{width:15px}.w16{width:16px}.w18{width:18px}.w21{width:21px}.w22{width:22px}.w24{width:24px}.w26{width:26px}.w39{width:39px}.w42{width:42px}.w50{width:50px}.w52{width:52px}.w56{width:56px}.w60{width:60px}.w63{width:63px}.w65{width:65px}.w66{width:66px}.w67{width:67px}.w68{width:68px}.w93{width:93px}.w114{width:114px}.w131{width:131px}.w156{width:156px}
.bi{height:23px;display:flex;align-items:center;justify-content:center;flex:none;position:relative}
.on{background:#c6c6c6}
.sep{height:23px;display:flex;justify-content:center;flex:none}
.sep::before{content:"";width:1px;background:#d4d4d4}
.box{height:23px;background:#fff;border:1px solid #c6c6c6;display:flex;align-items:center;padding:0 7px 0 2px;color:#333;flex:none}
.num{font-family:"Liberation Sans",sans-serif;font-size:13px}
.letter{font:15px "Liberation Sans",sans-serif;color:#555}
.letter.small{font-size:12px}
.tri{position:absolute;width:0;height:0;border-style:solid;border-color:transparent}
.tri.up{right:2px;top:5px;border-width:0 3px 3px;border-bottom-color:#3e7cb8}
.tri.down{right:2px;top:5px;border-width:3px 3px 0;border-top-color:#3e7cb8}
.fmt{font:700 13px "Liberation Sans",sans-serif;color:#555}
.fmt.it{font-style:italic}
.fmt.un{text-decoration:underline}
.color-a{font:700 14px "Liberation Sans",sans-serif;color:#555;padding-bottom:4px}
.under{position:absolute;left:3px;right:3px;bottom:2px;height:4px;background:#f00}
.wen{flex-direction:column;color:#3e7cb8;line-height:9px;font-size:9px}
.wen i{color:#555}
.wen b{font-weight:400;font-size:10px;line-height:10px}
.wtxt{display:flex;align-items:center;gap:3px;white-space:nowrap}
.pct{font:16px "Liberation Sans",sans-serif;color:#555}
.cma{font:700 16px "Liberation Serif",serif;color:#555;padding-bottom:7px}
.gallery{margin:2px 0 0 4px;width:335px;height:62px;background:#fff;border:1px solid #c6c6c6;display:flex}
.gcells{width:319px;display:grid;grid-template-columns:100px 100px 100px;grid-auto-rows:22px;column-gap:6px;row-gap:6px;padding:5px 0 0 3px}
.gc{font-size:14px;line-height:20px;padding-left:4px;color:#000;white-space:nowrap}
.g-bad4{background:#f9c;color:#909}
.g-good4{background:#cfc;color:#080}
.g-norm{box-shadow:0 0 0 3px #c6c6c6;position:relative}
.g-bad{background:#ffc7ce;color:#9c0006}
.g-good{background:#c6efce;color:#006100}
.gscroll{width:14px;margin-left:auto;display:flex;flex-direction:column;border-left:1px solid #c6c6c6;margin-top:-1px;margin-bottom:-1px}
.gs{display:flex;flex-direction:column;gap:2px;align-items:center;justify-content:center;border:1px solid #c6c6c6;border-left:0;background:#fff}
.gs1{height:22px;background:#e4e4e4}.gs2{height:19px;border-top:0}.gs3{height:21px;border-top:0}
.tri-up{width:0;height:0;border-style:solid;border-width:0 3.5px 4px;border-color:transparent transparent #aaa}
.more{width:7px;height:1px;background:#666}
.collapse{position:absolute;right:0;bottom:2px;width:11px;height:8px}
.collapse svg{display:block}

/* qat + formula */
.qat{height:45px;background:#e6e6e6;display:flex;align-items:flex-start;padding-top:6px;flex:none}
.custom{opacity:.35}
.fbar{height:28px;background:#e6e6e6;display:flex;padding-left:5px;flex:none}
.namebox{width:124px;background:#fff;border:1px solid #c6c6c6;display:flex;align-items:center;padding:0 7px 2px 6px;font:13.500px "Liberation Sans",sans-serif;color:#333}
.fdots{width:30px;display:flex;justify-content:center;align-items:center}
.fdots::before{content:"";width:2px;height:10px;background:repeating-linear-gradient(#999 0 2px,transparent 2px 4px)}
.fxbox{width:110px;background:#fff;border:1px solid #c6c6c6;display:flex;align-items:center;padding-left:1px}
.fxbox span{width:36px;display:flex;justify-content:center}
.fx{font:italic 700 13px "Liberation Serif",serif;color:#555}
.finput{margin-left:3px;flex:1;background:#fdfdfd;border:1px solid #c6c6c6;border-right:0;display:flex;align-items:center;padding:0 0 2px 11px;font:13.500px "Liberation Sans",sans-serif;color:#444;position:relative}
.fchev{margin-left:auto;margin-right:2px;display:flex}

/* sheet */
.main{height:761px;display:flex;background:#e6e6e6;padding-top:10px;flex:none}
.sheet{width:1642px;height:751px;overflow:hidden;flex:none}
.grid{width:1642px;table-layout:fixed;border-collapse:separate;border-spacing:0;background:#fff}
.c0{width:20px}.ca{width:93px}.cc{width:112px}.cl{width:84px}.cn{width:158px}.cp{width:218px}.cq{width:165px}.cr{width:50px}.cs{width:187px}.ct{width:143px}.cu{width:40px}
thead th{height:12px;padding:0;background:#e6e6e6;font:400 9px/9px "Liberation Sans",sans-serif;color:#444;border-right:1px solid #c0c0c0;border-bottom:1px solid #9e9e9e}
thead th:last-child{border-right:0}
thead th.cur{background:#d2d2d2;color:#217346;border-bottom:2px solid #217346}
thead th.hid{box-shadow:-2px 0 0 -1px #b8b8b8}
.corner{position:relative}
.corner i{position:absolute;right:2px;bottom:1px;width:0;height:0;border-style:solid;border-width:0 0 6px 6px;border-color:transparent transparent #bbb}
tbody th{height:28px;padding:0;background:#e6e6e6;font:400 9px/10px "Liberation Sans",sans-serif;color:#444;vertical-align:bottom;text-align:center;border-right:1px solid #b4b4b4;border-bottom:1px solid #c6c6c6}
tbody th.cur{background:#d2d2d2;color:#217346;border-right:2px solid #217346}
td{height:28px;padding:2px 0 0;text-align:center;vertical-align:middle;border-right:1px solid #d4d4d4;border-bottom:1px solid #d4d4d4;font:12.500px/14px "Liberation Sans","Noto Sans CJK SC",sans-serif;color:#222;white-space:nowrap;overflow:hidden}
td:last-child{border-right:1px solid #a0a0a0}
.ttl{font-size:16px;font-weight:700;color:#000;line-height:18px}
.big{font:700 16px/18px "Noto Sans CJK SC",sans-serif;color:#000;padding-top:0;padding-bottom:3px}
.bd{font:700 13px/16px "Noto Sans CJK SC",sans-serif;letter-spacing:1px;color:#000;padding-bottom:2px}
.bd2{font:700 14px/16px "Noto Sans CJK SC",sans-serif;color:#000;padding-bottom:4px}
.mono{font:12px/14px "Liberation Mono",monospace;letter-spacing:-.3px;color:#000;padding-top:3px}
.vscroll{width:14px;padding:2px 0 0 3px;display:flex;flex-direction:column;flex:none}
.vs-btn{height:15px;background:#fff;display:flex;align-items:center;justify-content:center;border:1px solid #c6c6c6;flex:none}
.vs-thumb{height:149px;background:#fff;border:2px solid #a6a6a6;border-right:0;flex:none}
.vs-down{margin-top:auto}

/* sheet tabs */
.sheetbar{height:28px;background:#e6e6e6;border-top:1px solid #a0a0a0;display:flex;flex:none;font-size:13px}
.nav{width:100px;height:23px;margin-top:1px;border-right:1px solid #a6a6a6;display:flex;align-items:center;padding-left:26px;gap:24px;flex:none}
.nl,.nr{width:0;height:0;border-style:solid;border-color:transparent}
.nl{border-width:4px 4px 4px 0;border-right-color:#c4c4c4}
.nr{border-width:4px 0 4px 4px;border-left-color:#c4c4c4}
.nl.dark{border-right-color:#555}.nr.dark{border-left-color:#555}
.st{height:23px;margin-top:1px;padding-bottom:2px;display:flex;align-items:center;justify-content:center;border-right:1px solid #a6a6a6;white-space:nowrap;flex:none;font-family:"Liberation Sans","Noto Sans CJK SC",sans-serif}
.st-on{width:75px;height:25px;margin-top:-1px;background:#fff;color:#217346;border-right:0;border-left:1px solid #a0a0a0;border-bottom:3px solid #217346}
.st-blue{width:113px;height:22px;margin-top:2px;margin-left:2px;background:#bdd7ee;color:#222;box-shadow:1px 0 0 #e6e6e6;border-right:0}
.st-org{width:58px;height:22px;margin-top:2px;margin-left:5px;background:#f4b183;color:#222;border-right:0;box-shadow:-3px 0 0 #e6e6e6,-4px 0 0 #a6a6a6,2px 0 0 #e6e6e6,3px 0 0 #a6a6a6}
.st-org+.st{margin-left:3px}
.add{margin-left:35px;margin-top:4px;flex:none;display:flex}
.hs{margin-left:auto;width:642px;display:flex;align-items:flex-start;padding-top:6px;margin-right:15px;flex:none}
.hs-dots{width:2px;height:14px;margin:1px 14px 0 0;background:repeating-linear-gradient(#aaa 0 2px,transparent 2px 5px);flex:none}
.hs-btn{width:14px;height:15px;background:#fff;border:1px solid #a6a6a6;display:flex;align-items:center;justify-content:center;flex:none}
.hs-thumb{width:111px;height:15px;background:#fff;border:1px solid #a6a6a6;flex:none}
.hs-track{flex:1;height:15px;background:#d9d9d9}

/* status */
.status{height:17px;background:#f1f1f1;display:flex;align-items:center;flex:none;color:#444;position:relative}
.s1{margin-left:7px}.s2{margin-left:19px}.s3{margin-left:17px;display:flex}
.views{margin-left:auto;display:flex;height:17px}
.v{width:38px;display:flex;align-items:center;justify-content:center}
.v-on{width:37px;background:#cfcfcf}
.zoom-minus{width:6px;height:2px;background:#555;margin-left:5px;flex:none}
.slider{position:relative;width:100px;height:1px;background:#999;margin-left:4px;flex:none}
.tick{position:absolute;left:50px;top:-2px;width:1px;height:5px;background:#999}
.thumb{position:absolute;left:27px;top:-7px;width:4px;height:15px;background:#555}
.zoom-plus{position:relative;width:9px;height:2px;background:#555;margin-left:4px;flex:none}
.zoom-plus::before{content:"";position:absolute;left:3.500px;top:-3.500px;width:2px;height:9px;background:#555}
.pct-t{margin-left:13px;width:46px;font-family:"Liberation Sans",sans-serif;flex:none}

/* overlays */
.stamp{position:absolute;left:607px;top:585px;width:134px;height:90px;background:#fff}
.stamp svg{display:block}
.stamp-t{font:12px "Noto Sans CJK SC",sans-serif;letter-spacing:-1.700px;fill:#ee1c25}
.sel{position:absolute;left:839px;top:304px;width:220px;height:31px;border:2px solid #217346}
.sel i{position:absolute;right:-4px;bottom:-4px;width:6px;height:6px;background:#217346;border:1px solid #fff}
.arrows{position:absolute;left:0;top:0;filter:drop-shadow(2px 2px 2px rgba(0,0,0,.4));pointer-events:none}
.cursor{position:absolute;left:1014px;top:358px}
.ime{position:absolute;left:925px;top:993px;width:60px;height:25px;background:#fff;border-radius:5px;box-shadow:0 1px 4px rgba(0,0,0,.6);display:flex;align-items:center;justify-content:center;gap:3px;font:13px "Liberation Sans","Noto Sans CJK SC",sans-serif;color:#333;white-space:pre}
.mark{position:absolute;left:1498px;top:984px;display:flex;pointer-events:none}
.mark-t{display:flex;flex-direction:column}
.mark-t b{font:700 21px/24px "Noto Sans CJK SC",sans-serif;color:#3d8cc8;white-space:nowrap}
.mark-t span{font:18px/17px "Liberation Sans",sans-serif;color:#4db56a;white-space:nowrap;margin-top:1px}
```
